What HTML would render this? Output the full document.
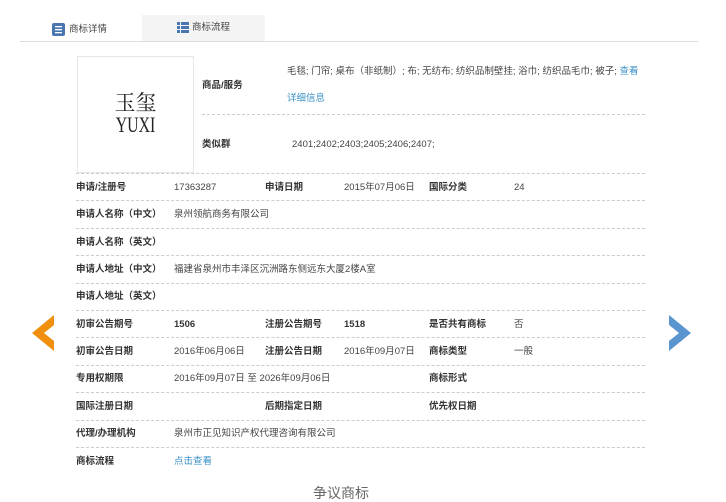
<!DOCTYPE html>
<html><head><meta charset="utf-8"><style>
*{margin:0;padding:0;box-sizing:border-box}
body{width:726px;height:502px;background:#fff;position:relative;overflow:hidden;font-family:"Liberation Sans","Noto Sans CJK SC",sans-serif;font-size:9.5px;color:#444}
.a{position:absolute;white-space:nowrap;line-height:12px}
.b{font-weight:bold;color:#333}
.l{position:absolute;left:76px;width:569px;border-top:1px dashed #ccc;height:0}
.link{color:#3a8fc6}
</style></head><body>
<div class="a" style="left:142px;top:15px;width:123px;height:26px;background:#f4f4f4"></div>
<div style="position:absolute;left:20px;top:41px;width:678px;border-top:1px solid #ddd"></div>
<svg class="a" style="left:52px;top:23px" width="13" height="13"><rect width="13" height="13" rx="2" fill="#4a76b0"/><rect x="3" y="3" width="7" height="1.3" fill="#fff"/><rect x="3" y="6" width="7" height="1.3" fill="#fff"/><rect x="3" y="9" width="7" height="1.3" fill="#fff"/></svg>
<div class="a" style="left:69px;top:24px">商标详情</div>
<svg class="a" style="left:177px;top:22px" width="12" height="11"><rect x="0" y="0" width="3" height="3" fill="#4a76b0"/><rect x="4" y="0" width="8" height="3" fill="#4a76b0"/><rect x="0" y="4" width="3" height="3" fill="#4a76b0"/><rect x="4" y="4" width="8" height="3" fill="#4a76b0"/><rect x="0" y="8" width="3" height="3" fill="#4a76b0"/><rect x="4" y="8" width="8" height="3" fill="#4a76b0"/></svg>
<div class="a" style="left:192px;top:22px">商标流程</div>

<div class="a" style="left:77px;top:56px;width:117px;height:117px;border:1px solid #e6e6e6"></div>
<div class="a" style="left:77px;top:93px;width:117px;text-align:center;font-family:'Liberation Serif','Noto Serif CJK SC',serif;font-size:21px;line-height:21px;color:#222">玉玺</div>
<div class="a" style="left:77px;top:114px;width:117px;text-align:center;font-family:'Liberation Serif',serif;font-size:22px;line-height:22px;color:#222;transform:scaleX(0.72)">YUXI</div>
<div class="a b" style="left:202px;top:80px">商品/服务</div>
<div class="a" style="left:287px;top:66px">毛毯; 门帘; 桌布（非纸制）; 布; 无纺布; 纺织品制壁挂; 浴巾; 纺织品毛巾; 被子; <span class="link">查看</span></div>
<div class="a link" style="left:287px;top:93px">详细信息</div>
<div class="l" style="left:202px;width:443px;top:114px"></div>
<div class="a b" style="left:202px;top:139px">类似群</div>
<div class="a" style="left:292px;top:139px">2401;2402;2403;2405;2406;2407;</div>
<div class="l" style="top:173px"></div>

<div class="a b" style="left:76px;top:182px">申请/注册号</div><div class="a" style="left:174px;top:182px">17363287</div><div class="a b" style="left:265px;top:182px">申请日期</div><div class="a" style="left:344px;top:182px">2015年07月06日</div><div class="a b" style="left:429px;top:182px">国际分类</div><div class="a" style="left:514px;top:182px">24</div>
<div class="l" style="top:200px"></div>
<div class="a b" style="left:76px;top:209px">申请人名称（中文）</div><div class="a" style="left:174px;top:209px">泉州领航商务有限公司</div>
<div class="l" style="top:228px"></div>
<div class="a b" style="left:76px;top:237px">申请人名称（英文）</div>
<div class="l" style="top:255px"></div>
<div class="a b" style="left:76px;top:264px">申请人地址（中文）</div><div class="a" style="left:174px;top:264px">福建省泉州市丰泽区沉洲路东侧远东大厦2楼A室</div>
<div class="l" style="top:283px"></div>
<div class="a b" style="left:76px;top:291px">申请人地址（英文）</div>
<div class="l" style="top:310px"></div>
<div class="a b" style="left:76px;top:319px">初审公告期号</div><div class="a b" style="left:174px;top:319px">1506</div><div class="a b" style="left:265px;top:319px">注册公告期号</div><div class="a b" style="left:344px;top:319px">1518</div><div class="a b" style="left:429px;top:319px">是否共有商标</div><div class="a" style="left:514px;top:319px">否</div>
<div class="l" style="top:337px"></div>
<div class="a b" style="left:76px;top:346px">初审公告日期</div><div class="a" style="left:174px;top:346px">2016年06月06日</div><div class="a b" style="left:265px;top:346px">注册公告日期</div><div class="a" style="left:344px;top:346px">2016年09月07日</div><div class="a b" style="left:429px;top:346px">商标类型</div><div class="a" style="left:514px;top:346px">一般</div>
<div class="l" style="top:365px"></div>
<div class="a b" style="left:76px;top:373px">专用权期限</div><div class="a" style="left:174px;top:373px">2016年09月07日 至 2026年09月06日</div><div class="a b" style="left:429px;top:373px">商标形式</div>
<div class="l" style="top:392px"></div>
<div class="a b" style="left:76px;top:401px">国际注册日期</div><div class="a b" style="left:265px;top:401px">后期指定日期</div><div class="a b" style="left:429px;top:401px">优先权日期</div>
<div class="l" style="top:420px"></div>
<div class="a b" style="left:76px;top:428px">代理/办理机构</div><div class="a" style="left:174px;top:428px">泉州市正见知识产权代理咨询有限公司</div>
<div class="l" style="top:447px"></div>
<div class="a b" style="left:76px;top:456px">商标流程</div><div class="a link" style="left:174px;top:456px">点击查看</div>

<svg class="a" style="left:32px;top:315px" width="24" height="36"><polygon points="22,0 0,18 22,36 22,26 12,18 22,10" fill="#f0900e"/></svg>
<svg class="a" style="left:667px;top:315px" width="24" height="36"><polygon points="2,0 24,18 2,36 2,26 12,18 2,10" fill="#5b95cf"/></svg>

<div class="a" style="left:313px;top:485px;font-size:14px;line-height:16px;color:#666">争议商标</div>
</body></html>
